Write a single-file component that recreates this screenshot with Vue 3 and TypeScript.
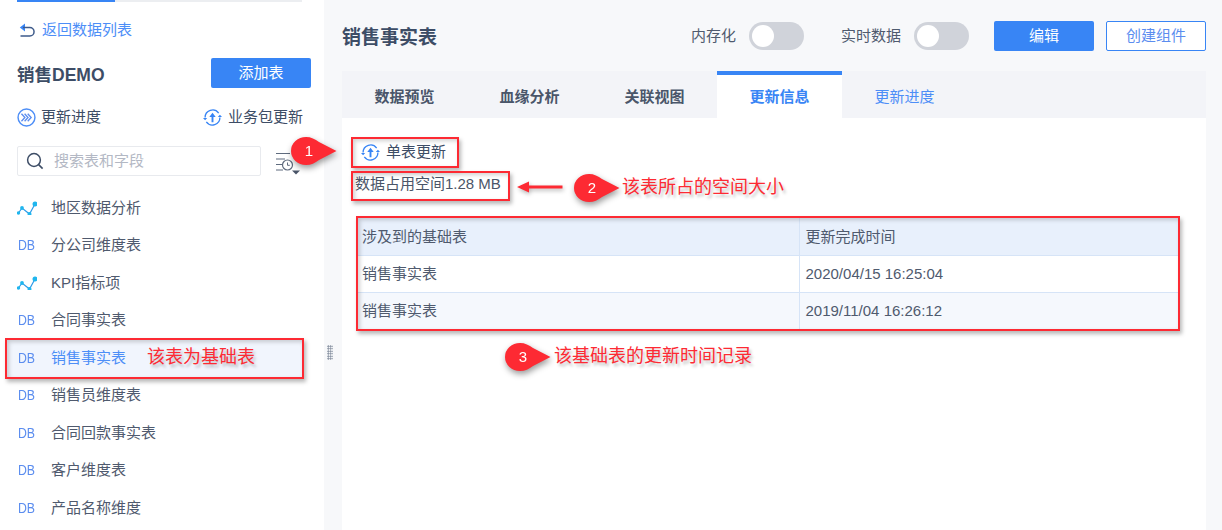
<script setup lang="ts">
interface Item { name: string; kind: 'chart' | 'db'; active?: boolean }
const items: Item[] = [
  { name: '地区数据分析', kind: 'chart' },
  { name: '分公司维度表', kind: 'db' },
  { name: 'KPI指标项', kind: 'chart' },
  { name: '合同事实表', kind: 'db' },
  { name: '销售事实表', kind: 'db', active: true },
  { name: '销售员维度表', kind: 'db' },
  { name: '合同回款事实表', kind: 'db' },
  { name: '客户维度表', kind: 'db' },
  { name: '产品名称维度', kind: 'db' },
]
const tabs = ['数据预览', '血缘分析', '关联视图', '更新信息', '更新进度']
const rows = [
  ['销售事实表', '2020/04/15 16:25:04'],
  ['销售事实表', '2019/11/04 16:26:12'],
]
const callouts = [
  { n: 1, cls: 'c1' },
  { n: 2, cls: 'c2' },
  { n: 3, cls: 'c3' },
]
</script>

<template>
  <div class="page">
    <aside class="side">
      <div class="progress"><div class="progress-fill"></div></div>
      <div class="back">
        <svg class="ic-back" viewBox="0 0 16 15" width="16" height="15">
          <path d="M6 .5 .8 4.500 6 8.500Z" fill="#3885f5" />
          <path d="M4 4.500h6.800a4 4 0 0 1 0 8.500H1.500" fill="none" stroke="#3d5a8a" stroke-width="1.500" />
        </svg>
        <span>返回数据列表</span>
      </div>
      <div class="title-row">
        <h2>销售DEMO</h2>
        <button class="btn primary add">添加表</button>
      </div>
      <div class="action-row">
        <div class="action">
          <svg viewBox="0 0 20 20" width="19" height="19">
            <circle cx="10" cy="10" r="8.900" fill="none" stroke="#4d8ef7" stroke-width="1.500" />
            <path d="M4.700 6 8.300 10 4.700 14M8 6 11.600 10 8 14M11.300 6 14.900 10 11.300 14" fill="none" stroke="#5b8def" stroke-width="1.400" />
          </svg>
          <span>更新进度</span>
        </div>
        <div class="action gap6">
          <svg viewBox="0 0 20 20" width="19" height="19">
            <path d="M2.200 10A7.900 7.900 0 0 1 16.500 5.300M17.800 10A7.900 7.900 0 0 1 3.500 14.700" fill="none" stroke="#3885f5" stroke-width="1.400" />
            <path d="M0 10.500 2.200 13 4.400 10.500ZM15.600 9.500 17.800 7 20 9.500Z" fill="#3885f5" />
            <path d="M10 5 6.600 9.500H9V15h2V9.500h2.400Z" fill="#3885f5" />
          </svg>
          <span>业务包更新</span>
        </div>
      </div>
      <div class="search-row">
        <div class="search">
          <svg viewBox="0 0 18 18" width="18" height="18">
            <circle cx="8" cy="8" r="6.400" fill="none" stroke="#3d4d66" stroke-width="1.500" />
            <path d="m12.600 12.600 4 4" stroke="#3d4d66" stroke-width="1.600" />
          </svg>
          <span>搜索表和字段</span>
        </div>
        <svg class="filter" viewBox="0 0 26 24" width="26" height="24">
          <path d="M1 1.500h14M1 7h9M1 12.500h6M1 18h7" stroke="#5f6b7e" stroke-width="1" fill="none" />
          <circle cx="12.500" cy="13" r="5" fill="#fff" stroke="#5f6b7e" stroke-width="1.200" />
          <path d="M12.500 10.500V13.300h2.300" stroke="#5f6b7e" stroke-width="1" fill="none" />
          <path d="M17 18.500h8l-4 4Z" fill="#4a5568" />
        </svg>
      </div>
      <ul class="list">
        <li v-for="it in items" :key="it.name" :class="{ active: it.active }">
          <svg v-if="it.kind === 'chart'" class="ic-chart" viewBox="0 0 20 14" width="20" height="14">
            <path d="M1.500 12 5 7 12.500 13 18 3" fill="none" stroke="#2f9be8" stroke-width="1.200" />
            <circle cx="1.500" cy="12" r="1.700" fill="#1fb6ee" />
            <circle cx="5" cy="7" r="1.900" fill="#1fb6ee" />
            <circle cx="12.500" cy="13" r="2" fill="#1fb6ee" />
            <circle cx="18" cy="3" r="2.500" fill="#1fb6ee" />
          </svg>
          <span v-else class="db">DB</span>
          <span>{{ it.name }}</span>
        </li>
      </ul>
      <div class="handle"></div>
    </aside>

    <main class="main">
      <header class="head">
        <h1>销售事实表</h1>
        <div class="controls">
          <span class="label">内存化</span>
          <span class="toggle"><i></i></span>
          <span class="label second">实时数据</span>
          <span class="toggle"><i></i></span>
          <button class="btn primary edit">编辑</button>
          <button class="btn ghost">创建组件</button>
        </div>
      </header>
      <nav class="tabs">
        <div
          v-for="(t, i) in tabs"
          :key="t"
          class="tab"
          :class="{ on: i === 3, link: i === 4 }"
        >{{ t }}</div>
      </nav>
      <section class="panel">
        <div class="single">
          <svg viewBox="0 0 20 20" width="19" height="19">
            <path d="M2.200 10A7.900 7.900 0 0 1 16.500 5.300M17.800 10A7.900 7.900 0 0 1 3.500 14.700" fill="none" stroke="#3885f5" stroke-width="1.400" />
            <path d="M0 10.500 2.200 13 4.400 10.500ZM15.600 9.500 17.800 7 20 9.500Z" fill="#3885f5" />
            <path d="M10 5 6.600 9.500H9V15h2V9.500h2.400Z" fill="#3885f5" />
          </svg>
          <span>单表更新</span>
        </div>
        <div class="space">数据占用空间1.28 MB</div>
        <table class="grid">
          <thead>
            <tr><th class="col1">涉及到的基础表</th><th>更新完成时间</th></tr>
          </thead>
          <tbody>
            <tr v-for="(r, i) in rows" :key="i">
              <td>{{ r[0] }}</td>
              <td>{{ r[1] }}</td>
            </tr>
          </tbody>
        </table>
      </section>
    </main>

    <!-- annotations drawn over the screenshot -->
    <div class="box b-row"></div>
    <div class="box b-single"></div>
    <div class="box b-space"></div>
    <div class="box b-table"></div>
    <svg class="arrow" viewBox="0 0 46 12" width="46" height="12">
      <path d="M0 6 12 .500V4.500H45.500V7.500H12V11.500Z" fill="#fd2a33" />
    </svg>
    <div v-for="c in callouts" :key="c.n" class="callout" :class="c.cls">
      <svg viewBox="0 0 47 30" width="47" height="30">
        <path d="M16 1C21 1 25 3 29 6L46.500 15 29 24C25 27 21 29 16 29A15 14 0 0 1 16 1Z" fill="#fd2a33" />
      </svg>
      <span>{{ c.n }}</span>
    </div>
    <div class="note n-row">该表为基础表</div>
    <div class="note n-space">该表所占的空间大小</div>
    <div class="note n-table">该基础表的更新时间记录</div>
  </div>
</template>

<style>
html, body { margin: 0; padding: 0; background: #fff; }
</style>

<style scoped>
.page {
  position: relative;
  display: flex;
  width: 1222px;
  height: 530px;
  overflow: hidden;
  background: #fff;
  color: #3d4d66;
  font: 15px/20px "Liberation Sans", "Noto Sans CJK SC", sans-serif;
}
h1, h2, ul { margin: 0; padding: 0; }
.side { position: relative; width: 324px; flex: none; background: #fff; }
.progress { height: 2px; margin: 0 22px 0 17px; background: #eceef1; }
.progress-fill { width: 98px; height: 2px; background: #3885f5; }
.back { display: flex; align-items: center; gap: 7px; margin: 18px 0 0 19px; color: #4d8ef7; }
.title-row { display: flex; align-items: center; justify-content: space-between; margin-top: 18px; padding: 0 13px 0 17px; }
.title-row h2 { padding-top: 4px; font-size: 17.500px; font-weight: 700; color: #3d4d66; }
.btn { height: 30px; width: 100px; padding: 0; border-radius: 2px; font: inherit; box-sizing: border-box; }
.primary { background: #3885f5; color: #fff; border: 0; }
.ghost { background: #fff; color: #5b8def; border: 1px solid #3885f5; margin-left: 12px; }
.edit { margin-left: 25px; }
.action-row { display: flex; justify-content: space-between; margin-top: 19px; padding: 0 21px 0 17px; }
.action { display: flex; align-items: center; gap: 5px; }
.gap6 { gap: 6px; }
.search-row { display: flex; align-items: center; margin-top: 19px; padding-left: 17px; }
.search {
  display: flex; align-items: center; gap: 10px;
  box-sizing: border-box; width: 244px; height: 30px; padding-left: 8px;
  border: 1px solid #e8eaee; border-radius: 2px; color: #b3b8c4;
}
.filter { margin: 5px 0 0 14px; }
.list { list-style: none; margin: 13px 21px 0 5px; }
.list li { display: flex; align-items: center; height: 37.500px; padding-left: 12px; color: #4f5a6e; }
.list li.active { background: #f1f5fd; color: #4d8ef7; }
.ic-chart { width: 20px; margin-right: 14px; flex: none; }
.db {
  display: block; flex: none; width: 20px; margin-right: 14px; padding-left: 1px; box-sizing: border-box;
  color: #5b8def; font-size: 14px; white-space: nowrap;
  transform: scaleX(.88); transform-origin: left;
}
.handle {
  position: absolute; left: 327px; top: 345px; width: 6px; height: 15px;
  background-image: radial-gradient(circle, #7d8798 0.800px, transparent 1px);
  background-size: 2.500px 2.500px;
}
.main { flex: 1; min-width: 0; display: flex; flex-direction: column; padding: 0 16px 0 18px; background: #f7f8fa; }
.head { display: flex; align-items: center; justify-content: space-between; height: 30px; margin-top: 21px; }
.head h1 { padding-top: 3px; font-size: 19px; font-weight: 700; color: #3d4d66; }
.controls { display: flex; align-items: center; }
.label { color: #4f5a6e; }
.second { margin-left: 37px; }
.toggle {
  display: block; box-sizing: border-box; width: 55px; height: 28px; margin-left: 13px;
  padding: 3px; border-radius: 14px; background: #d0d3da;
}
.toggle i { display: block; width: 22px; height: 22px; border-radius: 50%; background: #fff; }
.tabs { display: flex; height: 47px; margin-top: 20px; background: #f3f4f8; flex: none; }
.tab { box-sizing: border-box; width: 125px; padding-top: 3px; line-height: 46px; height: 47px; text-align: center; font-weight: 700; color: #4a566a; }
.tab.on { background: #fff; border-top: 4px solid #3885f5; padding-top: 0; line-height: 44px; color: #3885f5; }
.tab.link { font-weight: 400; color: #4d8ef7; }
.panel { flex: 1; background: #fff; }
.single { display: flex; align-items: center; gap: 6px; margin: 24px 0 0 19px; height: 20px; color: #3d4d66; }
.space { margin: 12px 0 0 13px; color: #4a5568; }
.grid {
  width: 821px; margin: 24px 0 0 15px; table-layout: fixed;
  border-collapse: collapse; color: #4f5a6e;
}
.grid th, .grid td {
  height: 37px; padding: 0 0 0 6px; box-sizing: border-box; text-align: left; font-weight: 400;
  border-bottom: 1px solid #d6e4f7; border-left: 1px solid #d6e4f7;
}
.grid th, .grid tbody tr:nth-child(2) td { padding-top: 1px; }
.grid th:first-child, .grid td:first-child { border-left: 0; padding-left: 5px; }
.grid tr:last-child td { border-bottom: 0; }
.col1 { width: 442px; }
.grid thead tr { background: #e8f0fc; }
.grid tbody tr:nth-child(2) { background: #f5f8fd; }

.box {
  position: absolute; box-sizing: border-box; border: 2px solid #fd2a33;
  box-shadow: 2px 3px 4px rgba(0, 0, 0, .28), inset 2px 2px 4px rgba(0, 0, 0, .18);
}
.b-row { left: 5px; top: 338px; width: 299px; height: 41px; }
.b-single { left: 351px; top: 137px; width: 108px; height: 31px; }
.b-space { left: 351px; top: 171px; width: 159px; height: 30px; }
.b-table { left: 356px; top: 216px; width: 824px; height: 115px; }
.arrow { position: absolute; left: 517px; top: 181px; filter: drop-shadow(1px 2px 2px rgba(0, 0, 0, .3)); }
.callout { position: absolute; width: 47px; height: 30px; filter: drop-shadow(1px 3px 3px rgba(0, 0, 0, .4)); }
.callout svg { display: block; }
.callout span {
  position: absolute; left: 3px; top: 0; width: 32px; line-height: 30px; text-align: center;
  color: #fff; font-size: 15px;
}
.c1 { left: 290px; top: 136px; }
.c2 { left: 573px; top: 173px; }
.c3 { left: 504px; top: 342px; }
.note {
  position: absolute; font-size: 18px; line-height: 24px; color: #fd2a33; white-space: nowrap;
  text-shadow: 2px 3px 3px rgba(0, 0, 0, .25);
}
.n-row { left: 147px; top: 345px; }
.n-space { left: 622px; top: 175px; }
.n-table { left: 554px; top: 344px; }
</style>
